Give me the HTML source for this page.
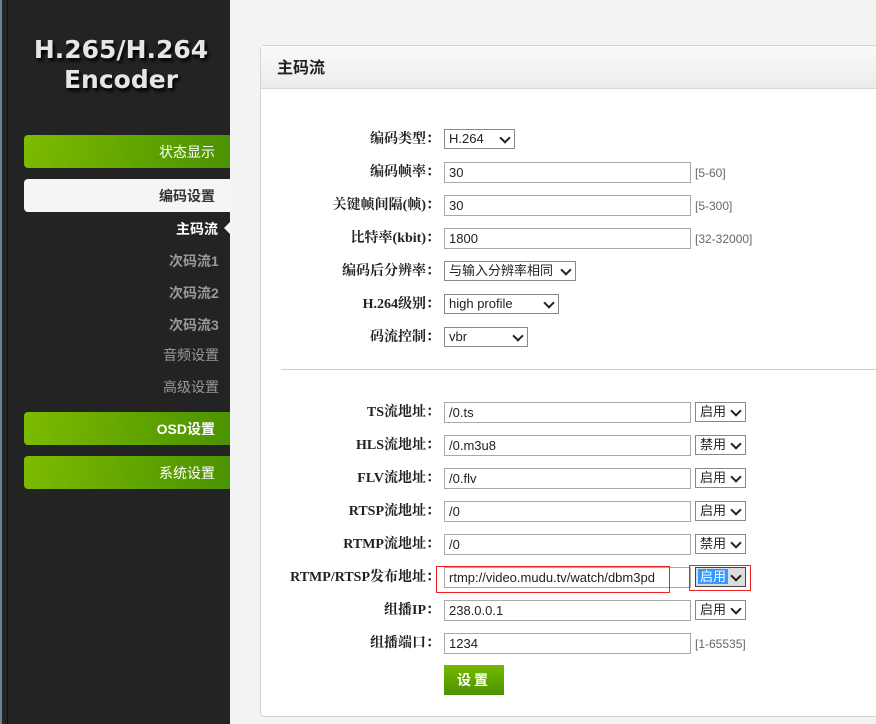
<!DOCTYPE html>
<html><head><meta charset="utf-8"><style>
*{margin:0;padding:0;box-sizing:border-box}
body{width:876px;height:724px;overflow:hidden;background:#f3f3f3;font-family:"Liberation Sans","Noto Sans CJK SC",sans-serif;position:relative}
#side{position:absolute;left:0;top:0;width:230px;height:724px;background:#232323;border-left:2px solid #6a8590}
#side:before{content:"";position:absolute;left:5px;top:0;width:1px;height:724px;background:#111}
.logo{position:absolute;left:0;width:238px;text-align:center;color:#e6e6e6;font-weight:bold;font-size:25px;line-height:30px;top:35px;text-shadow:2px 3px 3px #000;font-family:"DejaVu Sans","Liberation Sans",sans-serif}
.btn{position:absolute;left:24px;width:206px;height:33px;border-radius:4px 0 0 4px;background:linear-gradient(100deg,#7dbb00,#4a9200);color:#fff;font-size:14px;text-align:right;padding-right:15px;line-height:35px}
.btn.w{background:#f5f5f5;color:#333;font-weight:bold}
.sub{position:absolute;font-size:14px;color:#999;font-weight:bold}
.sub.a{color:#fff}
.arr{position:absolute;left:224px;top:221px;width:0;height:0;border:7px solid transparent;border-right-color:#f5f5f5;border-left:0}
#panel{position:absolute;left:260px;top:45px;width:640px;height:672px;background:#fff;border:1px solid #d4d4d4;border-radius:4px}
#hd{height:43px;background:linear-gradient(#fafafa,#ececec);border-bottom:1px solid #d8d8d8;font-weight:bold;font-size:16px;line-height:46px;padding-left:16px;color:#222}
.lb{position:absolute;left:240px;width:200px;text-align:right;font-family:"Liberation Serif","Noto Serif CJK SC",serif;font-weight:bold;font-size:14px;color:#222;line-height:22px}
.in{position:absolute;left:444px;width:247px;height:21px;border:1px solid #a9a9a9;font-size:13px;padding-left:4px;line-height:19px;color:#222;background:#fff}
.sel{position:absolute;height:20px;border:1px solid #888;font-size:13px;padding-left:4px;line-height:18px;color:#222;background:#fff}
.sel:after{content:"";position:absolute;right:5px;top:4px;width:6px;height:6px;border-right:2px solid #222;border-bottom:2px solid #222;transform:rotate(45deg)}
.rg{position:absolute;left:695px;font-size:12px;color:#666;line-height:22px}
.hr{position:absolute;left:281px;top:369px;width:595px;height:1px;background:#ccc}
.ok{position:absolute;left:444px;top:665px;width:60px;height:30px;background:linear-gradient(#76b800,#4b9300);color:#fff;font-weight:bold;font-size:14px;text-align:center;line-height:30px;letter-spacing:3px}
.red{position:absolute;border:1px solid #e22}
</style></head><body>
<div id="side">
<div class="logo">H.265/H.264<br>Encoder</div>
</div>
<div class="btn" style="top:135px">状态显示</div>
<div class="btn w" style="top:179px">编码设置</div>
<div class="arr"></div>
<div class="sub a" style="top:219px;left:176px">主码流</div>
<div class="sub" style="top:251px;left:169px">次码流1</div>
<div class="sub" style="top:283px;left:169px">次码流2</div>
<div class="sub" style="top:315px;left:169px">次码流3</div>
<div class="sub" style="top:345px;left:163px;font-weight:normal">音频设置</div>
<div class="sub" style="top:377px;left:163px;font-weight:normal">高级设置</div>
<div class="btn" style="top:412px;font-weight:bold">OSD设置</div>
<div class="btn" style="top:456px">系统设置</div>
<div id="panel"><div id="hd">主码流</div></div>

<div class="lb" style="top:129px">编码类型：</div><div class="sel" style="left:444px;top:129px;width:71px">H.264</div>
<div class="lb" style="top:162px">编码帧率：</div><div class="in" style="top:162px">30</div><div class="rg" style="top:162px">[5-60]</div>
<div class="lb" style="top:195px">关键帧间隔(帧)：</div><div class="in" style="top:195px">30</div><div class="rg" style="top:195px">[5-300]</div>
<div class="lb" style="top:228px">比特率(kbit)：</div><div class="in" style="top:228px">1800</div><div class="rg" style="top:228px">[32-32000]</div>
<div class="lb" style="top:261px">编码后分辨率：</div><div class="sel" style="left:444px;top:261px;width:132px">与输入分辨率相同</div>
<div class="lb" style="top:294px">H.264级别：</div><div class="sel" style="left:444px;top:294px;width:115px">high profile</div>
<div class="lb" style="top:327px">码流控制：</div><div class="sel" style="left:444px;top:327px;width:84px">vbr</div>
<div class="hr"></div>

<div class="lb" style="top:402px">TS流地址：</div><div class="in" style="top:402px">/0.ts</div><div class="sel" style="left:695px;top:402px;width:51px">启用</div>
<div class="lb" style="top:435px">HLS流地址：</div><div class="in" style="top:435px">/0.m3u8</div><div class="sel" style="left:695px;top:435px;width:51px">禁用</div>
<div class="lb" style="top:468px">FLV流地址：</div><div class="in" style="top:468px">/0.flv</div><div class="sel" style="left:695px;top:468px;width:51px">启用</div>
<div class="lb" style="top:501px">RTSP流地址：</div><div class="in" style="top:501px">/0</div><div class="sel" style="left:695px;top:501px;width:51px">启用</div>
<div class="lb" style="top:534px">RTMP流地址：</div><div class="in" style="top:534px">/0</div><div class="sel" style="left:695px;top:534px;width:51px">禁用</div>
<div class="lb" style="top:567px">RTMP/RTSP发布地址：</div><div class="in" style="top:567px">rtmp://video.mudu.tv/watch/dbm3pd</div>
<div class="sel" style="left:695px;top:567px;width:51px;background:#ddd;border-color:#444"><span style="background:#3399ff;color:#fff;padding:0 2px;margin-left:-2px">启用</span></div>
<div class="red" style="left:436px;top:566px;width:234px;height:27px"></div>
<div class="red" style="left:689px;top:565px;width:62px;height:26px"></div>
<div class="lb" style="top:600px">组播IP：</div><div class="in" style="top:600px">238.0.0.1</div><div class="sel" style="left:695px;top:600px;width:51px">启用</div>
<div class="lb" style="top:633px">组播端口：</div><div class="in" style="top:633px">1234</div><div class="rg" style="top:633px">[1-65535]</div>
<div class="ok">设置</div>
</body></html>
